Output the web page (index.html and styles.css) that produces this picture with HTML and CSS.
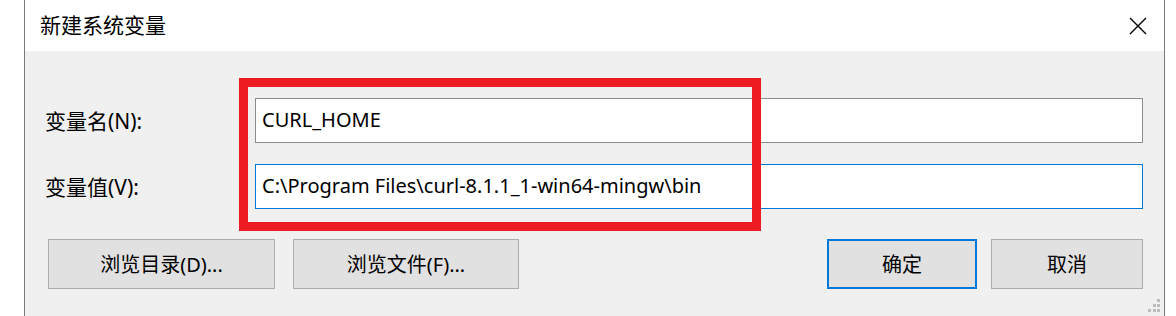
FILE: index.html
```html
<!DOCTYPE html>
<html lang="zh-CN">

<head>
    <meta charset="UTF-8">
    <meta name="viewport" content="width=device-width, initial-scale=1.0">
    <title>新建系统变量</title>
    <link rel="stylesheet" href="styles.css">
</head>

<body>
    <div class="dialog">
        <!-- 标题栏 -->
        <div class="titlebar">
            <span class="title">新建系统变量</span>
            <svg class="close" width="18" height="18" viewBox="0 0 18 18">
                <path d="M1 1 L17 17 M17 1 L1 17" stroke="#000" stroke-width="1.4" fill="none" />
            </svg>
        </div>

        <div class="body">
            <div class="row">
                <label class="label">变量名(N):</label>
                <div class="input">CURL_HOME</div>
            </div>
            <div class="row row2">
                <label class="label">变量值(V):</label>
                <div class="input focused">C:\Program Files\curl-8.1.1_1-win64-mingw\bin</div>
            </div>

            <div class="buttons">
                <button class="btn btn-dir">浏览目录(D)...</button>
                <button class="btn btn-file">浏览文件(F)...</button>
                <button class="btn btn-ok">确定</button>
                <button class="btn btn-cancel">取消</button>
            </div>
        </div>

        <!-- 红色标注框 -->
        <div class="mark"></div>

        <!-- 右下角拖动 -->
        <svg class="grip" width="16" height="16" viewBox="0 0 16 16">
            <rect x="12" y="1" width="3" height="3" fill="#bcbcbc" />
            <rect x="8" y="6" width="3" height="3" fill="#bcbcbc" />
            <rect x="12" y="6" width="3" height="3" fill="#bcbcbc" />
            <rect x="3" y="11" width="3" height="3" fill="#bcbcbc" />
            <rect x="8" y="11" width="3" height="3" fill="#bcbcbc" />
            <rect x="12" y="11" width="3" height="3" fill="#bcbcbc" />
        </svg>
    </div>
</body>

</html>
```

FILE: styles.css
```css
* {
    margin: 0px;
    padding: 0px;
    box-sizing: border-box;
}

body {
    background: #fff;
    font-family: "Noto Sans", "Noto Sans CJK SC", sans-serif;
    color: #000;
    overflow: hidden;
}

.dialog {
    width: 1141px;
    height: 316px;
    margin-left: 24px;
    border-left: 1px solid #7a7a7a;
    border-right: 1px solid #7a7a7a;
    display: flex;
    flex-direction: column;
    position: relative;
}

.titlebar {
    height: 51px;
    background: #fff;
    display: flex;
    align-items: center;
    justify-content: space-between;
    padding: 0 17px 3px 15px;
}

.title {
    font-size: 21px;
}

.close {
    margin-top: 3px;
}

.body {
    flex: 1;
    background: #f0f0f0;
    padding: 47px 21px 0 20px;
}

.row {
    display: flex;
    align-items: center;
    height: 45px;
}

.row2 {
    margin-top: 21px;
}

.label {
    width: 210px;
    font-size: 21px;
    padding-bottom: 1px;
}

.input {
    flex: 1;
    height: 45px;
    background: #fff;
    border: 1px solid #8c8c8c;
    padding: 0 6px 2px;
    display: flex;
    align-items: center;
    font-size: 20px;
    white-space: nowrap;
}

.focused {
    border-color: #0078d7;
}

.buttons {
    display: flex;
    margin-top: 30px;
    height: 50px;
}

.btn {
    height: 50px;
    background: #e1e1e1;
    border: 1px solid #adadad;
    font-family: "Noto Sans", "Noto Sans CJK SC", sans-serif;
    font-size: 20px;
    color: #000;
    padding-bottom: 2px;
}

.btn-dir {
    width: 227px;
    margin-left: 3px;
}

.btn-file {
    width: 226px;
    margin-left: 18px;
}

.btn-ok {
    width: 150px;
    margin-left: auto;
    border: 2px solid #0078d7;
}

.btn-cancel {
    width: 152px;
    margin-left: 14px;
}

/* 标注框，盖在输入框上面 */
.mark {
    position: absolute;
    left: 214px;
    top: 78px;
    width: 522px;
    height: 153px;
    border: 9px solid #ed1c24;
    pointer-events: none;
}

.grip {
    position: absolute;
    right: 3px;
    bottom: 2px;
}
```
